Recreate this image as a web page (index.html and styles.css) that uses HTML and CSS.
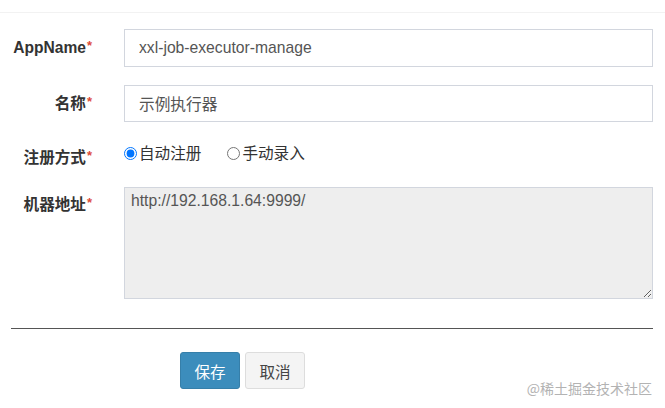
FILE: index.html
```html
<!DOCTYPE html>
<html lang="zh">
<head>
<meta charset="utf-8">
<link rel="stylesheet" href="styles.css">
</head>
<body>
<div class="modal">
  <div class="modal-header"></div>
  <form class="form">
    <div class="row row-1">
      <label class="label">AppName<span class="req">*</span></label>
      <div class="field"><input class="input input-1" type="text" value="xxl-job-executor-manage"></div>
    </div>
    <div class="row row-2">
      <label class="label">名称<span class="req">*</span></label>
      <div class="field"><input class="input input-2" type="text" value="示例执行器"></div>
    </div>
    <div class="row row-3">
      <label class="label">注册方式<span class="req">*</span></label>
      <div class="field radios">
        <label class="radio"><input type="radio" name="t" checked>自动注册</label>
        <label class="radio radio-2"><input type="radio" name="t">手动录入</label>
      </div>
    </div>
    <div class="row row-4">
      <label class="label">机器地址<span class="req">*</span></label>
      <div class="field"><textarea class="textarea" readonly>http://192.168.1.64:9999/</textarea></div>
    </div>
    <hr class="divider">
    <div class="actions">
      <button type="button" class="btn btn-primary">保存</button>
      <button type="button" class="btn btn-default">取消</button>
    </div>
  </form>
  <div class="watermark">@稀土掘金技术社区</div>
</div>
</body>
</html>
```
FILE: styles.css
```css
* { box-sizing: border-box; }
html, body {
  margin: 0;
  padding: 0;
  background: #fff;
}
body {
  font-family: "Liberation Sans", "Noto Sans CJK SC", sans-serif;
  font-size: 15.6px;
  color: #333;
  width: 665px;
  height: 408px;
  overflow: hidden;
}
.modal {
  position: relative;
  height: 408px;
}
.modal-header {
  height: 13px;
  border-bottom: 1px solid #f2f2f2;
}
.form {
  display: flex;
  flex-direction: column;
  padding: 0 12px 0 11px;
}
.row {
  display: grid;
  grid-template-columns: 80px 1fr;
  column-gap: 33px;
}
.row-1 { margin-top: 16px; }
.row-2 { margin-top: 18px; }
.row-3 { margin-top: 17px; }
.row-4 { margin-top: 18px; }
.label {
  font-weight: bold;
  font-size: 15.6px;
  text-align: right;
  padding-top: 8px;
  line-height: 22px;
  white-space: nowrap;
  margin-right: -1px;
}
.row-4 .label { padding-top: 7px; }
.req {
  display: inline-block;
  color: #dd4b39;
  font-size: 13px;
  vertical-align: top;
  line-height: 18px;
  font-weight: bold;
  margin-left: 1px;
}
.input {
  display: block;
  width: 100%;
  height: 38px;
  border: 1px solid #d2d6de;
  padding: 0 14px;
  font: inherit;
  font-size: 15.7px;
  color: #555;
  background: #fff;
  outline: none;
}
.input-2 { height: 37px; }
.radios {
  display: flex;
  padding-top: 4px;
  line-height: 22px;
}
.radio {
  display: inline-flex;
  align-items: flex-start;
  color: #333;
  font-size: 15.6px;
}
.radio input {
  width: 13px;
  height: 13px;
  margin: 4px 2px 0 0;
}
.radio-2 { margin-left: 26px; }
.textarea {
  display: block;
  width: 100%;
  height: 112px;
  border: 1px solid #d2d6de;
  background: #eee;
  padding: 3px 6px;
  font: inherit;
  font-size: 15.7px;
  line-height: 20px;
  color: #555;
  resize: both;
  outline: none;
}
.divider {
  margin: 29px 0 0 0;
  border: 0;
  border-top: 1px solid #555;
  height: 0;
}
.actions {
  display: flex;
  gap: 5px;
  margin-top: 23px;
  padding-left: 169px;
}
.btn {
  width: 60px;
  height: 37px;
  border-radius: 3px;
  font-family: "Liberation Sans", "Noto Sans CJK SC", sans-serif;
  font-size: 15.6px;
  padding: 0;
  cursor: pointer;
}
.btn-primary {
  background: #3c8dbc;
  border: 1px solid #367fa9;
  color: #fff;
}
.btn-default {
  background: #f4f4f4;
  border: 1px solid #ddd;
  color: #444;
}
.watermark {
  position: absolute;
  right: 13px;
  top: 378px;
  font-family: "Noto Sans CJK SC", sans-serif;
  font-size: 14px;
  line-height: 20px;
  color: #b3b3b3;
}
```
